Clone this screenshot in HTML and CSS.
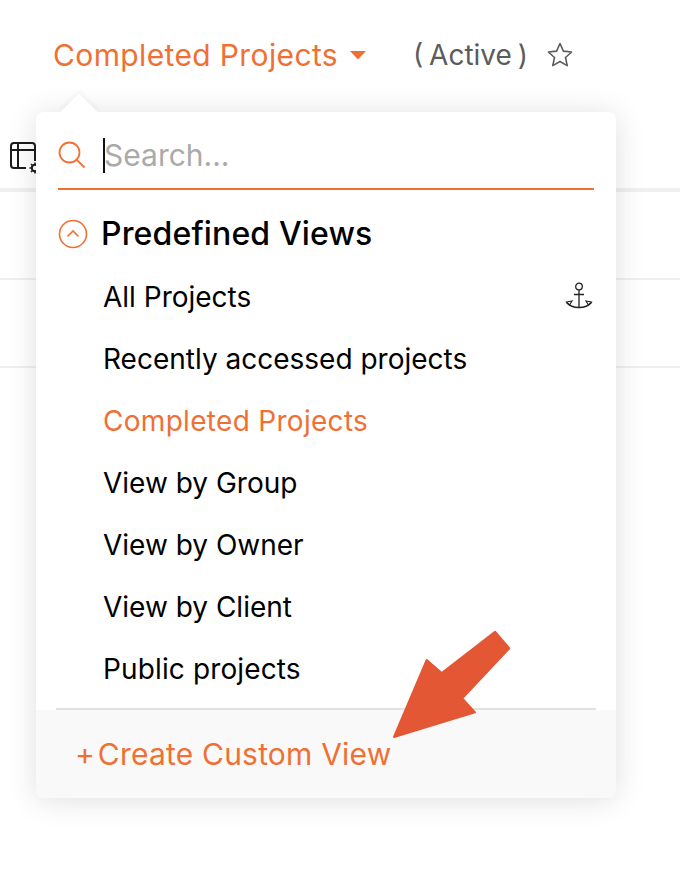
FILE: index.html
```html
<!DOCTYPE html>
<html lang="en">
<head>
<meta charset="utf-8">
<title>Projects</title>
<link rel="stylesheet" href="styles.css">
</head>
<body>
<header class="top">
  <span class="title">Completed Projects</span>
  <svg class="caret" width="16" height="9" viewBox="0 0 16 9"><path d="M0 0h16L8 8.500z" fill="#f07033"/></svg>
  <span class="status">( Active )</span>
  <svg class="star" width="28" height="28" viewBox="0 0 28 28"><path d="M14 2.500l3.400 7.600 8.200.9-6.100 5.500 1.700 8.100-7.200-4.100-7.200 4.100 1.700-8.100L2.400 11l8.200-.9z" fill="none" stroke="#5c5c5c" stroke-width="1.600" stroke-linejoin="round"/></svg>
</header>
<section class="bg">
  <div class="bg-toolbar">
    <svg class="grid-icon" width="30" height="36" viewBox="0 0 30 36"><path d="M17 28H5a3 3 0 0 1-3-3V6a3 3 0 0 1 3-3h18a3 3 0 0 1 3 3v15M2 10h24M9 3v25" fill="none" stroke="#1c1c1c" stroke-width="2"/><circle cx="26" cy="28" r="3.200" fill="none" stroke="#1c1c1c" stroke-width="2"/><path d="M26 22.500v2.500M26 31v2.500M20.500 28h2.500M29 28h1M22 24l2 2M22 32l2-2" stroke="#1c1c1c" stroke-width="1.600"/></svg>
  </div>
  <div class="bg-row"></div>
  <div class="bg-row"></div>
</section>
<div class="menu">
  <span class="notch"></span>
  <div class="search">
    <svg class="search-icon" width="28" height="28" viewBox="0 0 28 28"><circle cx="11.500" cy="11.500" r="10" fill="none" stroke="#f07033" stroke-width="1.800"/><path d="M18.800 18.800l7.700 7.700" stroke="#f07033" stroke-width="1.800"/></svg>
    <span class="cursor"></span>
    <span class="placeholder">Search...</span>
  </div>
  <div class="group">
    <svg width="30" height="30" viewBox="0 0 30 30"><circle cx="15" cy="15" r="13.500" fill="none" stroke="#f07033" stroke-width="1.600"/><path d="M9.500 17.500l5.500-5.500 5.500 5.500" fill="none" stroke="#f07033" stroke-width="1.600"/></svg>
    <span class="group-name">Predefined Views</span>
  </div>
  <ul class="list">
    <li class="item">All Projects
      <svg class="anchor" width="28" height="28" viewBox="0 0 28 28"><circle cx="14" cy="4.500" r="3.300" fill="none" stroke="#222" stroke-width="1.300"/><path d="M14 8v17M9 12.500h10M1.500 20.500c3 3.500 7.500 5 12.500 5s9.500-1.500 12.500-5" fill="none" stroke="#222" stroke-width="1.300"/><path d="M1.500 20l5.500-1-2.500 4zM26.500 20l-5.500-1 2.500 4z" fill="none" stroke="#222" stroke-width="1.100"/></svg>
    </li>
    <li class="item">Recently accessed projects</li>
    <li class="item current">Completed Projects</li>
    <li class="item">View by Group</li>
    <li class="item">View by Owner</li>
    <li class="item">View by Client</li>
    <li class="item wide">Public projects</li>
  </ul>
  <div class="foot"><span class="plus">+</span><span class="create">Create Custom View</span></div>
</div>
<svg class="arrow" width="680" height="882" viewBox="0 0 680 882"><path d="M394 737L426.700 660 441.700 673 495 631.700 509.300 648.300 462.300 698.300 475 712.300z" fill="#e35735" stroke="#e35735" stroke-width="2" stroke-linejoin="round"/></svg>
</body>
</html>
```
FILE: styles.css
```css
* { box-sizing: border-box; }
html, body { margin: 0; padding: 0; }
body {
  width: 680px;
  height: 882px;
  overflow: hidden;
  position: relative;
  background: #fff;
  font-family: Inter, "Noto Sans", sans-serif;
  color: #000;
}
.top {
  display: flex;
  align-items: center;
  height: 112px;
  padding: 0 0 2px 53px;
}
.title { font-size: 30px; letter-spacing: .37px; color: #f07033; }
.caret { margin-left: 12px; }
.status { font-size: 28px; word-spacing: -2px; color: #5c5c5c; margin-left: 47px; }
.star { margin-left: 18px; }
.bg-toolbar {
  height: 80px;
  border-bottom: 4px solid #f0f0f0;
  padding: 28px 0 0 9px;
}
.grid-icon { display: block; }
.bg-row { height: 88px; border-bottom: 2px solid #f0f0f0; }
.menu {
  position: absolute;
  left: 36px;
  top: 112px;
  width: 580px;
  height: 686px;
  background: #fff;
  border-radius: 8px;
  box-shadow: 0 2px 30px rgba(0, 0, 0, .13);
  display: flex;
  flex-direction: column;
}
.notch {
  position: absolute;
  left: 29px;
  top: -14px;
  width: 28px;
  height: 28px;
  background: #fff;
  transform: rotate(45deg) scale(.95);
  box-shadow: -2px -2px 6px rgba(0, 0, 0, .04);
}
.search {
  position: relative;
  margin: 0 22px;
  height: 78px;
  border-bottom: 2px solid #f07033;
  display: flex;
  align-items: center;
  padding-top: 10px;
}
.search-icon { width: 28px; height: 28px; }
.cursor { width: 2px; height: 35px; background: #111; margin-left: 17px; }
.placeholder { font-size: 30px; color: #aaa; margin-left: -1px; }
.group {
  display: flex;
  align-items: center;
  gap: 13px;
  padding: 11px 0 0 22px;
  height: 76px;
}
.group-name { font-size: 32px; letter-spacing: .15px; font-weight: 500; }
.list { list-style: none; margin: 0; padding: 0 23px 0 67px; flex: 1; }
.item {
  height: 62px;
  display: flex;
  align-items: center;
  justify-content: space-between;
  font-size: 28px;
}
.anchor { margin-bottom: 3px; }
.current { color: #f07033; letter-spacing: .3px; }
.wide { letter-spacing: .13px; }
.foot {
  margin-top: auto;
  height: 88px;
  background: #f9f9f9;
  border-radius: 0 0 8px 8px;
  position: relative;
  display: flex;
  align-items: center;
  gap: 3px;
  padding-left: 39px;
  color: #f07033;
  font-size: 30px;
}
.foot::before {
  content: "";
  position: absolute;
  left: 20px;
  right: 20px;
  top: -2px;
  height: 2px;
  background: #e2e2e2;
}
.create { letter-spacing: .2px; }
.arrow { position: absolute; left: 0; top: 0; pointer-events: none; }
```
